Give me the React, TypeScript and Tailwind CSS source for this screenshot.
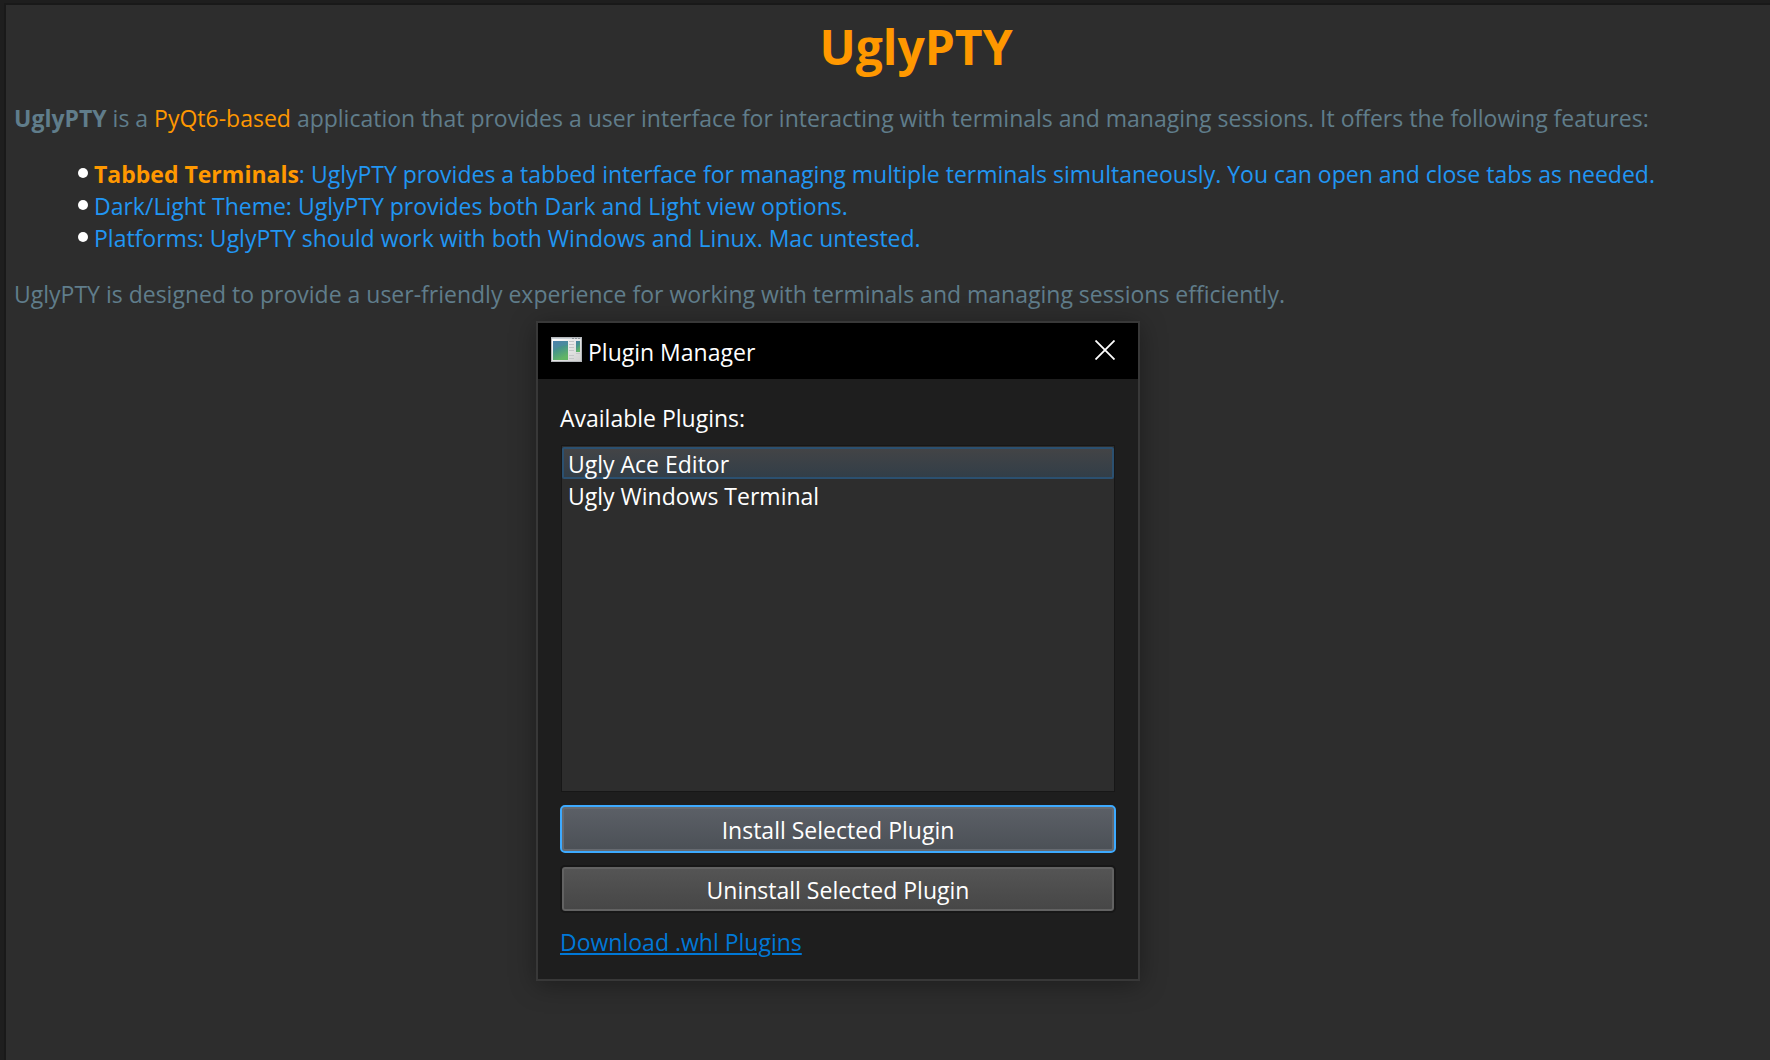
import { useState } from "react";

const features = [
  { term: "Tabbed Terminals", text: ": UglyPTY provides a tabbed interface for managing multiple terminals simultaneously. You can open and close tabs as needed." },
  { text: "Dark/Light Theme: UglyPTY provides both Dark and Light view options." },
  { text: "Platforms: UglyPTY should work with both Windows and Linux. Mac untested." },
];

const plugins = ["Ugly Ace Editor", "Ugly Windows Terminal"];

function WindowIcon() {
  return (
    <svg width="31" height="25" viewBox="0 0 31 25" aria-hidden="true">
      <defs>
        <linearGradient id="screen" x1="0" y1="0" x2="0.4" y2="1">
          <stop offset="0" stopColor="#4a7da8" />
          <stop offset="0.5" stopColor="#46948a" />
          <stop offset="1" stopColor="#62b565" />
        </linearGradient>
        <linearGradient id="frame" x1="0" y1="0" x2="1" y2="1">
          <stop offset="0" stopColor="#ffffff" />
          <stop offset="1" stopColor="#d0d0d0" />
        </linearGradient>
      </defs>
      <rect width="31" height="25" fill="#b4b7ba" />
      <rect x="1" y="1" width="29" height="23" fill="url(#frame)" />
      <rect x="1" y="1" width="29" height="1" fill="#c9d0d6" />
      <path d="M21 1.5h2M24 1.5h2M27 1.5h2" stroke="#8f9499" />
      <rect x="2" y="4" width="15" height="19" fill="url(#screen)" />
      <path d="M2 14Q8 8 17 8V4H2z" fill="#4d84b0" fillOpacity="0.45" />
      <path d="M18 4.5h5M18 7.5h5M18 10.5h5M18 13.5h5M18 18.5h5M18 21.5h5" stroke="#c4c6c8" />
      <rect x="25" y="4" width="4" height="11" fill="url(#screen)" />
      <path d="M25 16.5h4" stroke="#c4c6c8" />
    </svg>
  );
}

function PluginManager() {
  const [selected, setSelected] = useState(0);
  return (
    <section
      role="dialog"
      aria-labelledby="dialog-title"
      className="absolute top-[321px] left-[536px] w-[604px] border-2 border-[#383838] bg-[#1e1e1e] text-white shadow-[0_4px_24px_rgba(0,0,0,0.35)]"
    >
      <header className="flex h-14 items-center bg-black pr-5 pb-[3px] pl-[13px]">
        <WindowIcon />
        <h2 id="dialog-title" className="ml-[6px] flex-1 pt-1">Plugin Manager</h2>
        <button type="button" aria-label="Close" className="p-[3px]">
          <svg width="20" height="20" viewBox="0 0 20 20" aria-hidden="true">
            <path d="M0.5 0.5l19 19M19.5 0.5l-19 19" stroke="#fff" strokeWidth="1.8" />
          </svg>
        </button>
      </header>
      <div className="flex flex-col px-[22px] pt-[23px] pb-[21px]">
        <span id="plugins-label">Available Plugins:</span>
        <div
          role="listbox"
          aria-labelledby="plugins-label"
          className="mx-px mt-[11px] h-[347px] border border-[#171717] bg-[#2d2d2d] pt-px"
        >
          {plugins.map((name, i) => (
            <button
              key={name}
              type="button"
              role="option"
              aria-selected={i === selected}
              onClick={() => setSelected(i)}
              className={
                i === selected
                  ? "block h-8 w-full rounded-[2px] border-2 border-[#2b5070] bg-linear-to-b from-[#434446] to-[#323e48] pt-px pl-1 text-left leading-7"
                  : "block h-8 w-full border-2 border-transparent pt-px pl-1 text-left leading-7"
              }
            >
              {name}
            </button>
          ))}
        </div>
        <button
          type="button"
          className="mt-[13px] h-12 rounded-[5px] border-2 border-[#3daaff] bg-linear-to-b from-[#5c6067] to-[#4b5056] pt-px shadow-[inset_0_0_0_2px_#666a70]"
        >
          Install Selected Plugin
        </button>
        <button
          type="button"
          className="mt-3 h-12 rounded-[5px] border-2 border-[#171717] bg-linear-to-b from-[#555555] to-[#464646] pt-px shadow-[inset_0_0_0_2px_#626262]"
        >
          Uninstall Selected Plugin
        </button>
        <a href="#plugins" className="mt-[13px] self-start text-[#0078d7] underline decoration-2 underline-offset-2">
          Download .whl Plugins
        </a>
      </div>
    </section>
  );
}

export default function App() {
  return (
    <div className="relative flex min-h-screen overflow-hidden bg-[#1e1e1e] pt-[3px] pl-1 font-['Open_Sans',sans-serif] text-[23px] leading-8">
      <main className="flex-1 border-t-2 border-l-2 border-[#191919] bg-[#2d2d2d] px-2 pt-[9px] text-[#607d8b]">
        <h1 className="pl-14 text-center text-[48px] leading-[66px] font-bold text-[#ff9800]">UglyPTY</h1>
        <p className="mt-[22px]">
          <strong>UglyPTY</strong> is a <span className="text-[#ff9800]">PyQt6-based</span> application that provides a user
          interface for interacting with terminals and managing sessions. It offers the following features:
        </p>
        <ul className="my-6 pl-16 text-[#2196f3]">
          {features.map((f) => (
            <li key={f.text} className="flex">
              <span className="mt-[10px] mr-[6px] size-[10px] shrink-0 rounded-full bg-white" />
              <span>
                {f.term && <strong className="text-[#ff9800]">{f.term}</strong>}
                {f.text}
              </span>
            </li>
          ))}
        </ul>
        <p>UglyPTY is designed to provide a user-friendly experience for working with terminals and managing sessions efficiently.</p>
      </main>
      <PluginManager />
    </div>
  );
}
